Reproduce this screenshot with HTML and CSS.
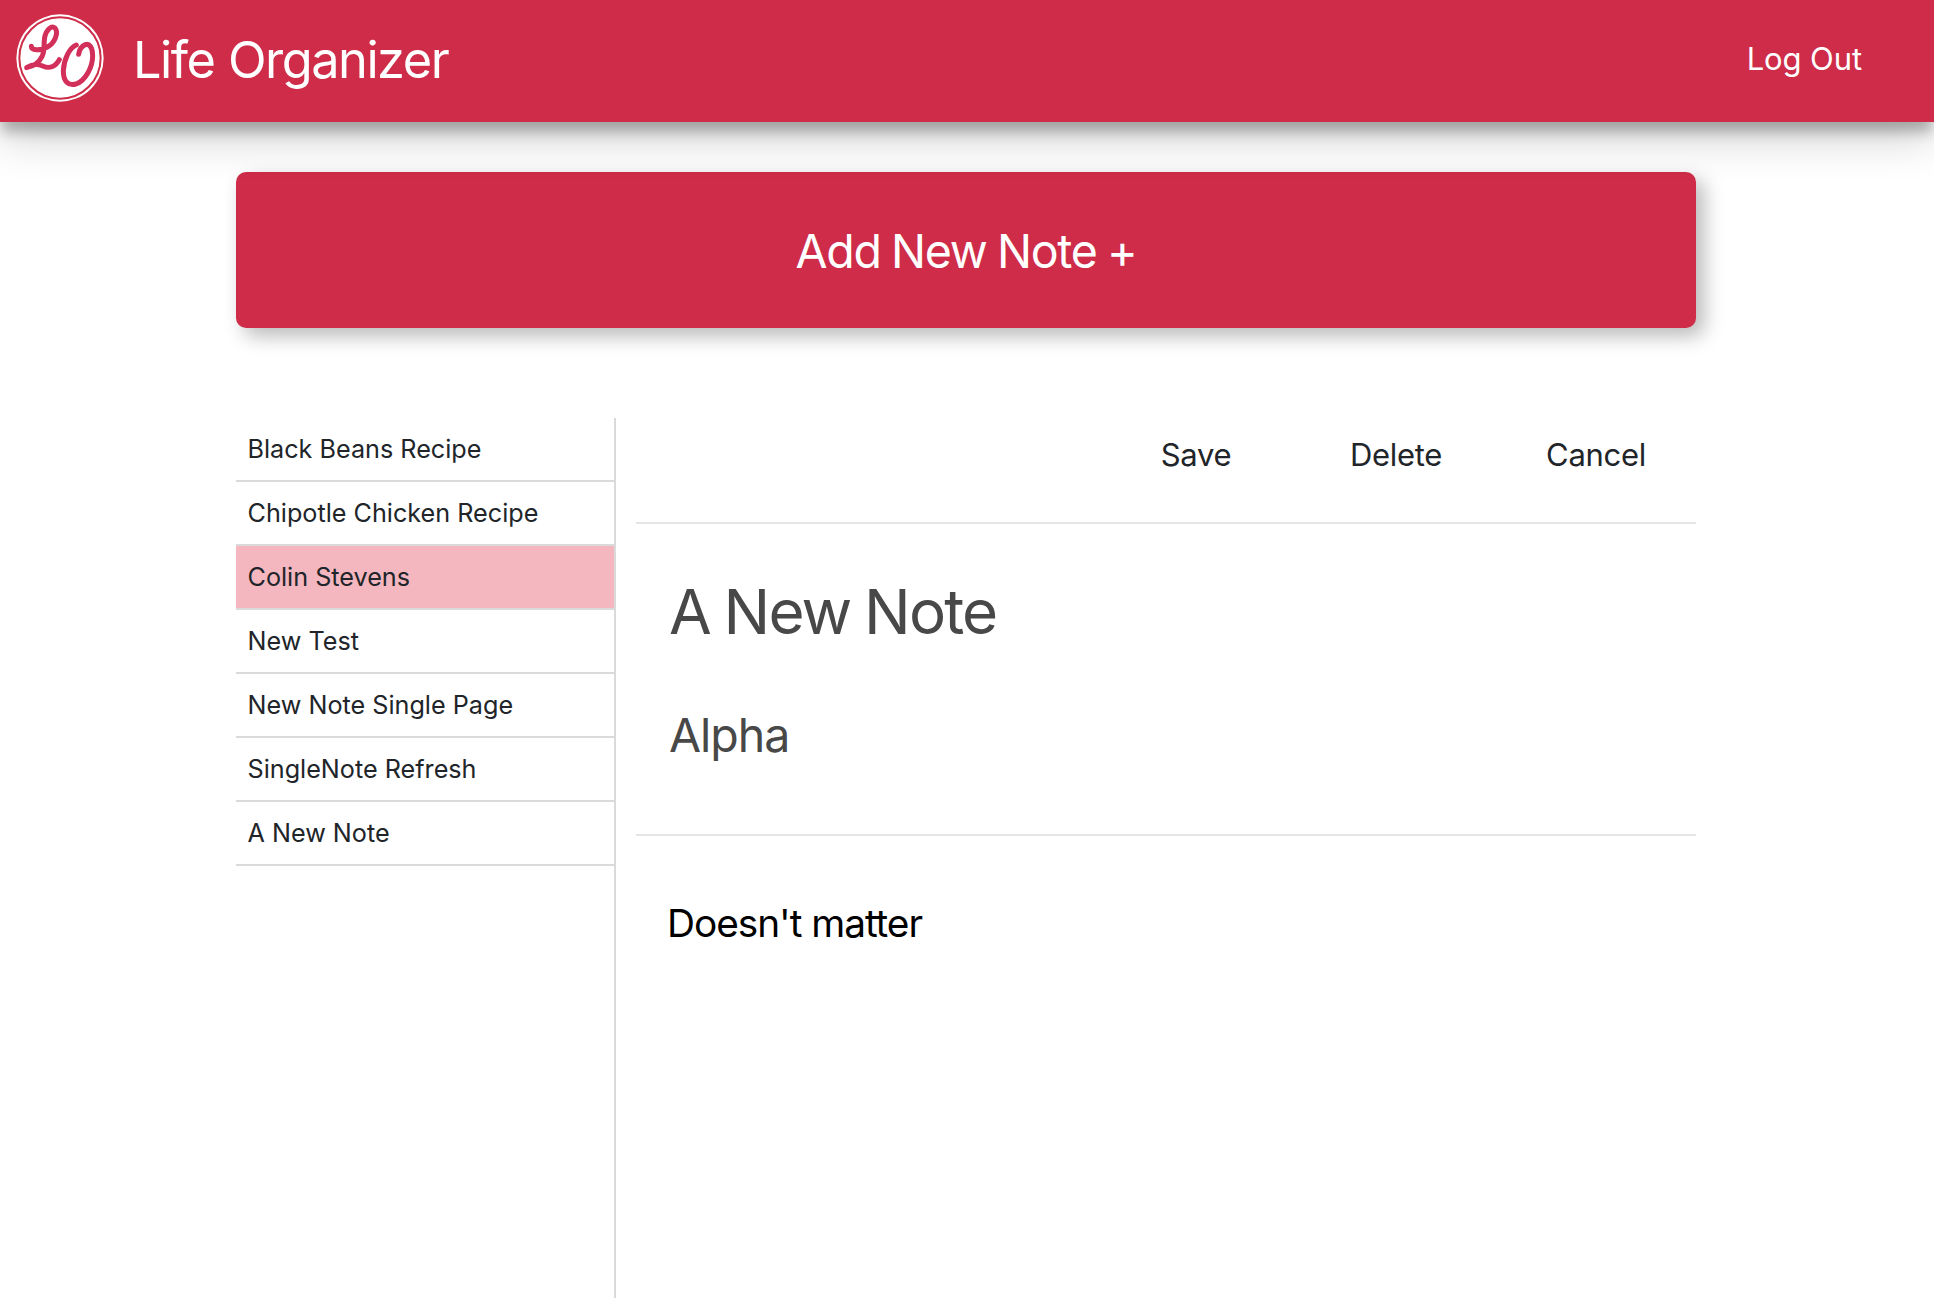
FILE: index.html
```html
<!DOCTYPE html>
<html lang="en">
<head>
<meta charset="utf-8">
<title>Life Organizer</title>
<link rel="stylesheet" href="styles.css">
</head>
<body>
<header class="topbar">
  <svg class="logo" viewBox="48 42 264 264" aria-hidden="true">
    <circle class="logo-disc" cx="180" cy="174" r="131"/>
    <circle class="logo-ring" cx="180" cy="174" r="122"/>
    <path class="logo-stroke" d="M94 139C94 152 120 153 141 142C166 129 176 97 165 84C155 75 139 88 134 112C130 139 135 152 126 170C116 190 100 199 80 203C96 192 112 191 128 198C150 208 168 198 178 179"/>
    <path class="logo-stroke" d="M229 135C208 143 191 180 190 213C190 244 205 259 228 252C257 242 278 200 278 167C278 142 268 130 256 134C244 139 238 150 236 163"/>
  </svg>
  <span class="brand">Life Organizer</span>
  <a class="logout">Log Out</a>
</header>
<main class="page">
  <button class="add-note" type="button">Add New Note +</button>
  <div class="workspace">
    <ul class="note-list">
      <li class="note-item">Black Beans Recipe</li>
      <li class="note-item">Chipotle Chicken Recipe</li>
      <li class="note-item active">Colin Stevens</li>
      <li class="note-item">New Test</li>
      <li class="note-item">New Note Single Page</li>
      <li class="note-item">SingleNote Refresh</li>
      <li class="note-item">A New Note</li>
    </ul>
    <section class="editor">
      <nav class="actions"><a class="action">Save</a><a class="action">Delete</a><a class="action">Cancel</a></nav>
      <div class="heading">
        <h1 class="title">A New Note</h1>
        <h2 class="category">Alpha</h2>
      </div>
      <p class="content">Doesn't matter</p>
    </section>
  </div>
</main>
</body>
</html>
```
FILE: styles.css
```css
* {
  box-sizing: border-box;
  margin: 0;
  padding: 0;
}

body {
  height: 1298px;
  display: flex;
  flex-direction: column;
  overflow: hidden;
  background: #fff;
  color: #212529;
  font-family: Inter, "Liberation Sans", sans-serif;
}

.topbar {
  position: relative;
  z-index: 1;
  flex: none;
  height: 122px;
  display: flex;
  align-items: center;
  padding: 0 72px 6px 16px;
  background: #ce2c48;
  color: #fff;
  box-shadow: 0 12px 12px -2px rgba(0, 0, 0, .25), 0 16px 44px rgba(0, 0, 0, .19);
}

.logo {
  width: 88px;
  height: 88px;
}

.logo-disc {
  fill: #fff;
}

.logo-ring {
  fill: none;
  stroke: #ce2c48;
  stroke-width: 6;
}

.logo-stroke {
  fill: none;
  stroke: #d2305a;
  stroke-width: 15;
  stroke-linecap: round;
  stroke-linejoin: round;
}

.brand {
  margin-left: 29px;
  padding-top: 3px;
  font-size: 50.5px;
  letter-spacing: -1.5px;
  word-spacing: .8px;
}

.logout {
  margin-left: auto;
  padding-top: 1px;
  font-size: 31px;
  letter-spacing: -.1px;
}

.page {
  flex: 1;
  width: 1460px;
  margin-left: 236px;
  padding-top: 50px;
  display: flex;
  flex-direction: column;
}

.add-note {
  flex: none;
  height: 156px;
  padding-top: 2px;
  border: 0;
  border-radius: 10px;
  background: #ce2c48;
  color: #fff;
  font-family: inherit;
  font-size: 46.5px;
  letter-spacing: -1.3px;
  word-spacing: -1.3px;
  box-shadow: 8px 8px 20px rgba(0, 0, 0, .28);
}

.workspace {
  flex: 1;
  margin-top: 90px;
  display: grid;
  grid-template-columns: 380px 1060px;
  column-gap: 20px;
}

.note-list {
  list-style: none;
  border-right: 2px solid #dadada;
}

.note-item {
  height: 64px;
  padding-left: 11.5px;
  border-bottom: 2px solid #dadada;
  font-size: 25.2px;
  line-height: 62px;
}

.active {
  background: #f4b6bf;
}

.actions {
  height: 106px;
  display: flex;
  justify-content: flex-end;
  border-bottom: 2px solid #e5e5e5;
  font-size: 31px;
  letter-spacing: -.3px;
  line-height: 74px;
}

.action {
  width: 200px;
  text-align: center;
}

.heading {
  height: 312px;
  padding: 48px 0 0 33px;
  border-bottom: 2px solid #e5e5e5;
  color: #484848;
}

.title {
  font-size: 62px;
  font-weight: 400;
  letter-spacing: -1.85px;
  word-spacing: -2px;
  line-height: 80px;
}

.category {
  margin-top: 53px;
  font-size: 46.5px;
  font-weight: 400;
  letter-spacing: -1px;
  line-height: 60px;
}

.content {
  padding: 57px 0 0 31px;
  color: #000;
  font-size: 38.8px;
  letter-spacing: -1.04px;
  line-height: 60px;
}
```
